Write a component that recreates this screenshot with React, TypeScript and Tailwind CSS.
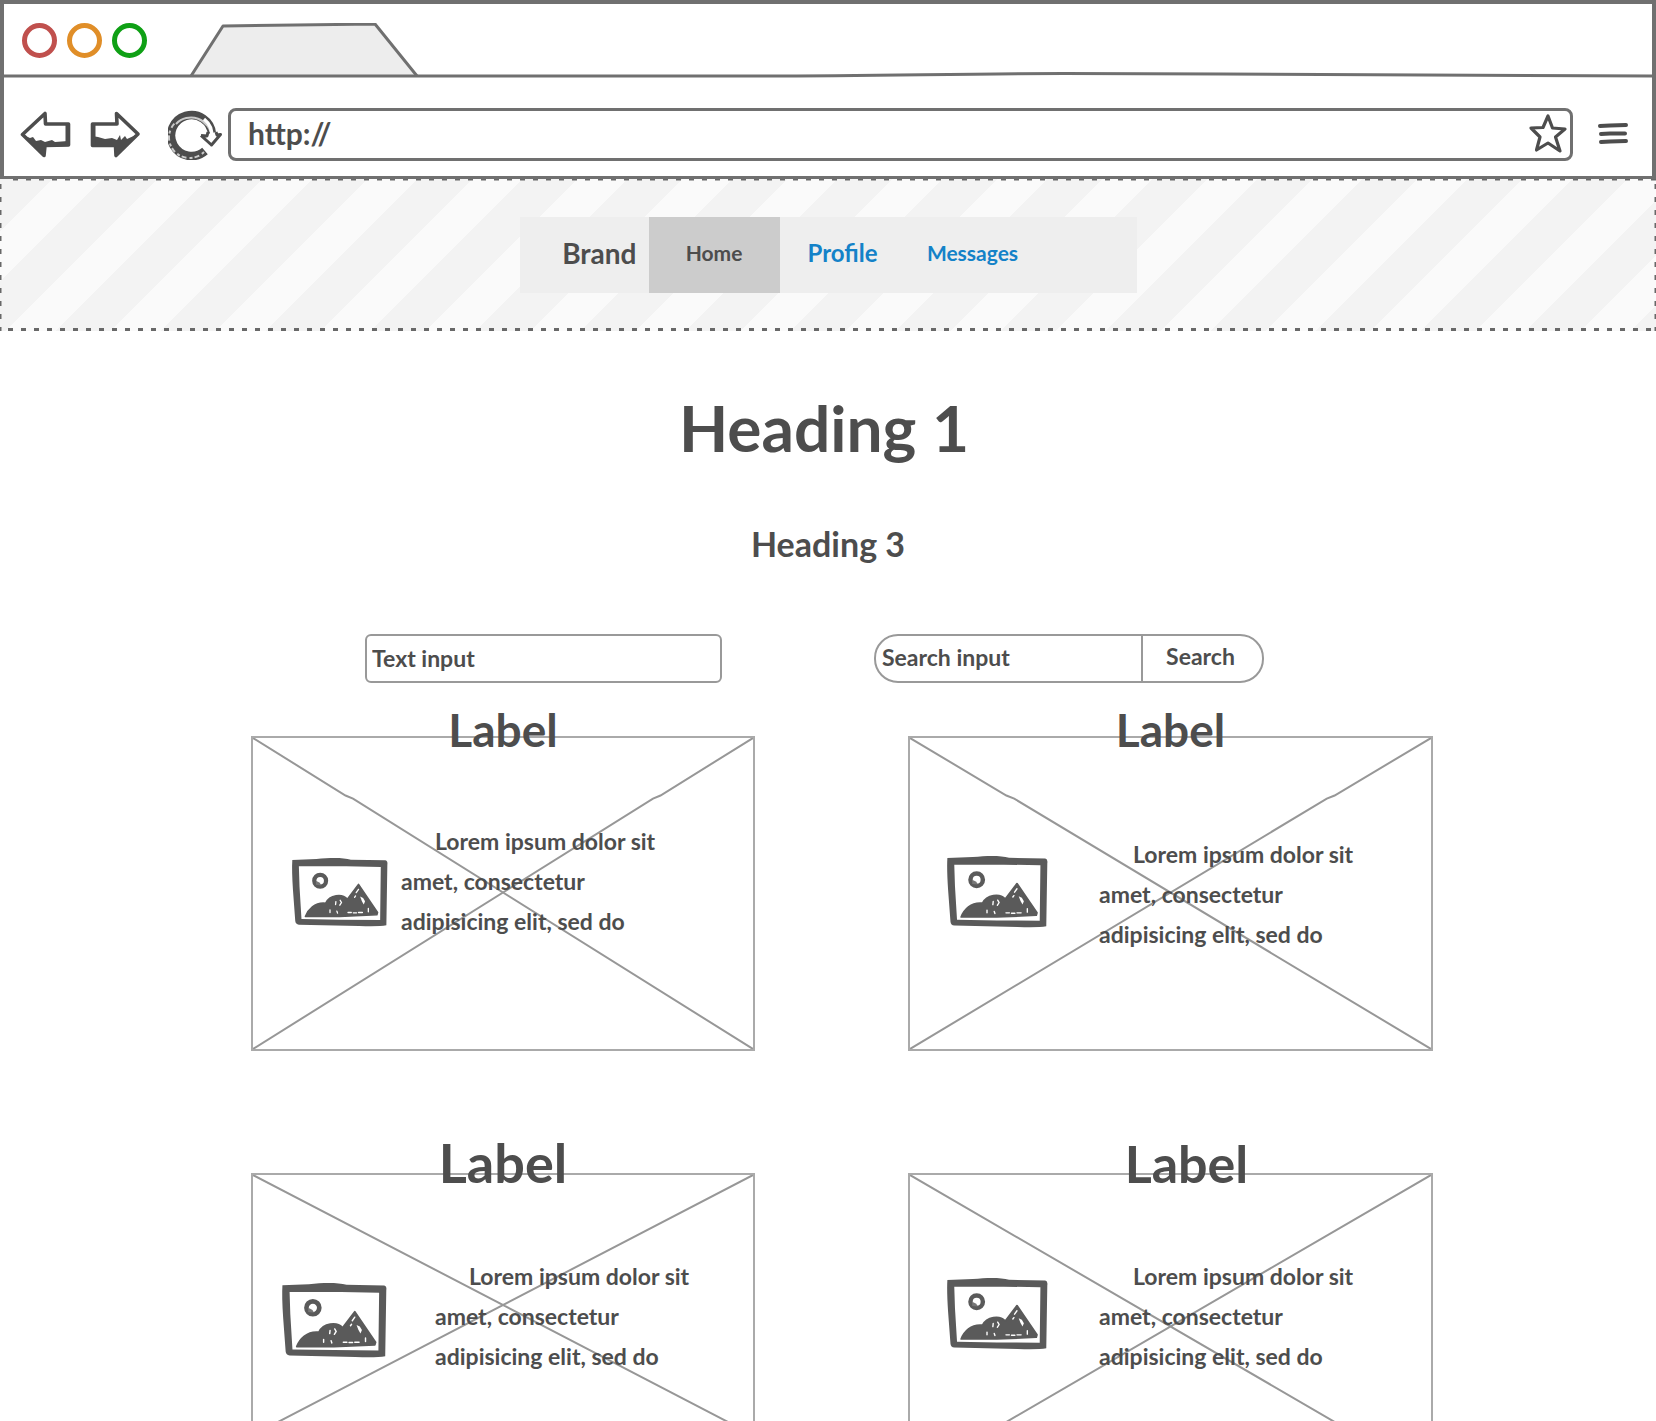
import React from "react";

const INK = "#4d4d4d";
const LINE = "#707070";

function BackIcon() {
  return (
    <svg width="52" height="50" viewBox="20 110 52 50" aria-hidden="true">
      <path d="M22.500 134.500 L45 113.500 L45.500 124 L68.500 124 L68.500 145 L45 145.500 L44 155.500 Z" fill="#fff" stroke={INK} strokeWidth="3.600" strokeLinejoin="round" />
      <path d="M23 135 L30 138 L33 137 L36 141 L41 140 L45 142 L52 140 L55 142 L68 141 L69 146 L45 147 L44 156 Z" fill={INK} />
      <path d="M67.500 125 V144" stroke={INK} strokeWidth="4" />
    </svg>
  );
}

function ForwardIcon() {
  return (
    <svg width="52" height="50" viewBox="89 110 52 50" aria-hidden="true">
      <path d="M92.500 124 L117 124 L116.500 113.500 L138 134 L116 155.500 L115.500 145.500 L92.500 145.500 Z" fill="#fff" stroke={INK} strokeWidth="3.600" strokeLinejoin="round" />
      <path d="M92 136 L98 137 L105 139 L112 138 L117 140 L120 135 L121 140 L125 136 L127 139 L138 134 L116 157 L115 146 L92 146 Z" fill={INK} />
      <path d="M93.500 125 V145" stroke={INK} strokeWidth="4" />
    </svg>
  );
}

function ReloadIcon() {
  return (
    <svg width="55" height="50" viewBox="168 109 55 50" fill="none" aria-hidden="true">
      <path d="M205 150 A20.500 20.500 0 1 1 212 133" stroke={INK} strokeWidth="8.500" />
      <path d="M176 123 A20.500 20.500 0 0 1 211.500 136" stroke="#fff" strokeWidth="2" opacity="0.700" />
      <path d="M204 118 A20.500 20.500 0 0 1 211.500 137" stroke="#fff" strokeWidth="3.500" />
      <path d="M204 151 A20.500 20.500 0 0 1 175 122" stroke="#fff" strokeWidth="2" strokeDasharray="3 3 5 2" opacity="0.700" />
      <path d="M201 134.500 L207 135 L208 131 M216 131 L217 134 L220.500 133.500 L211.500 144 L201 134.500" fill="#fff" stroke={INK} strokeWidth="3" strokeLinejoin="round" />
    </svg>
  );
}

function StarIcon() {
  return (
    <svg width="40" height="42" viewBox="1529 113 40 42" aria-hidden="true">
      <path d="M1549 117 L1553.500 129 L1566 130 L1556.500 138 L1561 152 L1549 144 L1537.500 151 L1541 138 L1532 129 L1544 128.500 Z" fill="none" stroke={INK} strokeWidth="3.200" strokeLinejoin="round" />
    </svg>
  );
}

function MenuIcon() {
  return (
    <svg width="32" height="24" viewBox="1597 121 32 24" aria-hidden="true">
      <path d="M1600 126 L1610 125.500 L1626 125 M1601 134 L1610 133.500 L1625 133.500 M1601 142 L1610 141.500 L1626 141" fill="none" stroke={INK} strokeWidth="4" strokeLinecap="round" strokeLinejoin="round" />
    </svg>
  );
}

function PictureIcon({ className }: { className: string }) {
  return (
    <svg className={className} viewBox="32 20 296 212" preserveAspectRatio="none" role="img" aria-label="Image placeholder">
      <path
        fillRule="evenodd"
        fill="#5a5a5a"
        d="M36 29 L110 26 C150 22 190 21 215 28 L320 30 Q328 32 326 44 L323 227 Q300 231 240 229 L56 225 Q46 224 45 214 L38 120 Q34 60 36 29 Z M56 48 L58 110 L64 208 L180 210 L304 211 L306 50 L200 48 Z"
      />
      <circle cx="121" cy="92" r="18" fill="#fff" stroke="#5a5a5a" strokeWidth="13" />
      <path d="M108 92 L120 98 L124 106 L108 104 Z" fill="#777" />
      <path
        fill="#5a5a5a"
        stroke="#5a5a5a"
        strokeWidth="5"
        strokeLinejoin="round"
        d="M76 200 C84 180 104 156 138 160 C150 135 188 130 204 148 L238 103 L296 188 L294 195 L180 200 Z"
      />
      <path
        fill="none"
        stroke="#fff"
        strokeWidth="4"
        strokeLinecap="round"
        d="M169 155 L168 164 M182 151 L186 158 L181 166 M151 180 L151 188 M172 184 L174 190 M231 128 L238 118 M229 138 L226 142 M206 188 H216 M222 189 H232 M238 188 H250 M268 176 L268 186"
      />
      <path d="M243 140 L252 144 L258 154 L254 164 L248 153 Z" fill="#fff" />
    </svg>
  );
}

function Cross({ d }: { d: string }) {
  return (
    <svg className="pointer-events-none absolute inset-0 h-full w-full" viewBox="0 0 100 100" preserveAspectRatio="none" aria-hidden="true">
      <path d={d} fill="none" stroke="#979797" strokeWidth="2" vectorEffect="non-scaling-stroke" />
    </svg>
  );
}

const KINKED = "M0 0 L18.500 18.500 L20 19.500 L100 100 M100 0 L81.500 18.500 L80 19.500 L0 100";
const STRAIGHT = "M0 0 L100 100 M100 0 L0 100";

const cards = [
  { box: "h-[315px]", cross: KINKED, label: "text-[46px] -top-10", icon: "ml-[38px] mt-[119px] h-[70px] w-[97px]", text: "ml-[13px] mt-[83px]" },
  { box: "h-[315px]", cross: KINKED, label: "text-[46px] -top-10", icon: "ml-[36px] mt-[117px] h-[73px] w-[102px]", text: "ml-[51px] mt-[96px]" },
  { box: "h-[264px]", cross: STRAIGHT, label: "text-[54px] -top-11", icon: "ml-[28px] mt-[107px] h-[76px] w-[106px]", text: "ml-[48px] mt-[81px]" },
  { box: "h-[307px]", cross: STRAIGHT, label: "text-[52px] -top-11 pl-8", icon: "ml-[36px] mt-[102px] h-[73px] w-[102px]", text: "ml-[51px] mt-[81px]" },
];

export default function App() {
  return (
    <div className="h-screen overflow-hidden bg-white font-['Lato',sans-serif] font-bold text-[#4d4d4d]">
      <header className="border-x-4 border-t-4 border-b-[3px] border-[#707070]">
        <div className="relative flex h-[74px] items-end gap-[42px] pb-[2px] pl-[18px]">
          <div className="flex gap-[10px] self-start pt-[19px]">
            <button aria-label="Close" className="size-[35px] rounded-full border-[5px] border-[#c0504d]" />
            <button aria-label="Minimize" className="size-[35px] rounded-full border-[5px] border-[#e08e28]" />
            <button aria-label="Maximize" className="size-[35px] rounded-full border-[5px] border-[#0fa015]" />
          </div>
          <svg width="230" height="53" viewBox="189 23 230 53" aria-hidden="true">
            <path d="M191 76 L223 26 L375 24 L417 76" fill="#ededed" stroke={LINE} strokeWidth="3" strokeLinejoin="round" />
          </svg>
          <svg className="absolute bottom-0 left-0 h-[6px] w-full" viewBox="0 0 1648 6" preserveAspectRatio="none" aria-hidden="true">
            <path d="M0 4 L750 4 C880 4 950 1.500 1060 1.500 C1250 1.500 1400 4 1648 4" fill="none" stroke={LINE} strokeWidth="3" />
          </svg>
        </div>
        <div className="flex items-center pt-[30px] pr-[23px] pb-[15px] pl-[16px]">
          <button aria-label="Back"><BackIcon /></button>
          <button aria-label="Forward" className="ml-[17px]"><ForwardIcon /></button>
          <button aria-label="Reload" className="ml-[27px]"><ReloadIcon /></button>
          <div className="ml-[5px] flex h-[53px] flex-1 items-center rounded-lg border-[3px] border-[#707070] pr-[2px] pl-[17px]">
            <input aria-label="Address" defaultValue="http://" className="min-w-0 flex-1 pb-1 text-[30px] leading-9 outline-none" />
            <button aria-label="Bookmark" className="pb-1"><StarIcon /></button>
          </div>
          <button aria-label="Menu" className="ml-6 pb-1"><MenuIcon /></button>
        </div>
      </header>

      <section className="relative flex h-[152px] justify-center bg-[linear-gradient(135deg,#f3f3f3_0%,#f3f3f3_25%,#fafafa_25%,#fafafa_49%,#f3f3f3_49%,#f3f3f3_75%,#fafafa_75%,#fafafa_99%,#f3f3f3_99%)] bg-[length:105px_105px] pt-[38px]">
        <svg className="pointer-events-none absolute inset-0 h-full w-full" aria-hidden="true">
          <g stroke="#686868" strokeWidth="3" strokeDasharray="5 8">
            <line x1="13" y1="0" x2="100%" y2="0" />
            <line x1="0" y1="5" x2="0" y2="100%" />
            <line x1="100%" y1="5" x2="100%" y2="100%" />
          </g>
        </svg>
        <svg className="pointer-events-none absolute bottom-0 left-0 h-[3px] w-full" aria-hidden="true">
          <line x1="8" y1="1.500" x2="100%" y2="1.500" stroke="#686868" strokeWidth="3" strokeDasharray="5 8" />
        </svg>
        <nav className="relative flex h-[76px] w-[617px] items-stretch bg-[#eee] text-[21px]">
          <a href="#" className="flex w-[129px] items-center justify-end pr-3 pb-1 text-[28px]">Brand</a>
          <a href="#" className="flex w-[131px] items-center justify-center bg-[#ccc] pb-1">Home</a>
          <a href="#" className="flex w-[126px] items-center justify-center pb-1 text-[24px] text-[#1482c8]">Profile</a>
          <a href="#" className="flex w-[134px] items-center justify-center pb-1 text-[#1482c8]">Messages</a>
        </nav>
      </section>

      <main>
        <h1 className="mt-[49px] pr-2 text-center text-[64px] leading-[96px]">Heading 1</h1>
        <h3 className="mt-[42px] text-center text-[34px] leading-[52px]">Heading 3</h3>

        <form className="mt-[64px] flex gap-[152px] pl-[365px]" onSubmit={(e) => e.preventDefault()}>
          <input aria-label="Text input" defaultValue="Text input" className="h-[49px] w-[357px] rounded-md border-2 border-[#999] pb-[2px] pl-[5px] text-[23px] outline-none" />
          <div className="flex h-[49px] w-[390px] overflow-hidden rounded-3xl border-2 border-[#999] text-[23px]">
            <input aria-label="Search input" defaultValue="Search input" className="min-w-0 flex-1 pb-[2px] pl-[6px] outline-none" />
            <button className="w-[121px] border-l-2 border-[#999] pr-1 pb-1">Search</button>
          </div>
        </form>

        <div className="mt-[53px] grid grid-cols-[504fr_525fr] items-start gap-x-[153px] gap-y-[122px] pr-[223px] pl-[251px]">
          {cards.map((c, i) => (
            <article key={i} className={"relative flex items-start border-2 border-[#aaa] " + c.box}>
              <Cross d={c.cross} />
              <h2 className={"absolute inset-x-0 text-center leading-[64px] " + c.label}>Label</h2>
              <PictureIcon className={"relative shrink-0 " + c.icon} />
              <p className={"relative indent-[34px] text-[23px] leading-[40px] " + c.text}>
                Lorem ipsum dolor sit
                <br />
                amet, consectetur
                <br />
                adipisicing elit, sed do
              </p>
            </article>
          ))}
        </div>
      </main>
    </div>
  );
}
